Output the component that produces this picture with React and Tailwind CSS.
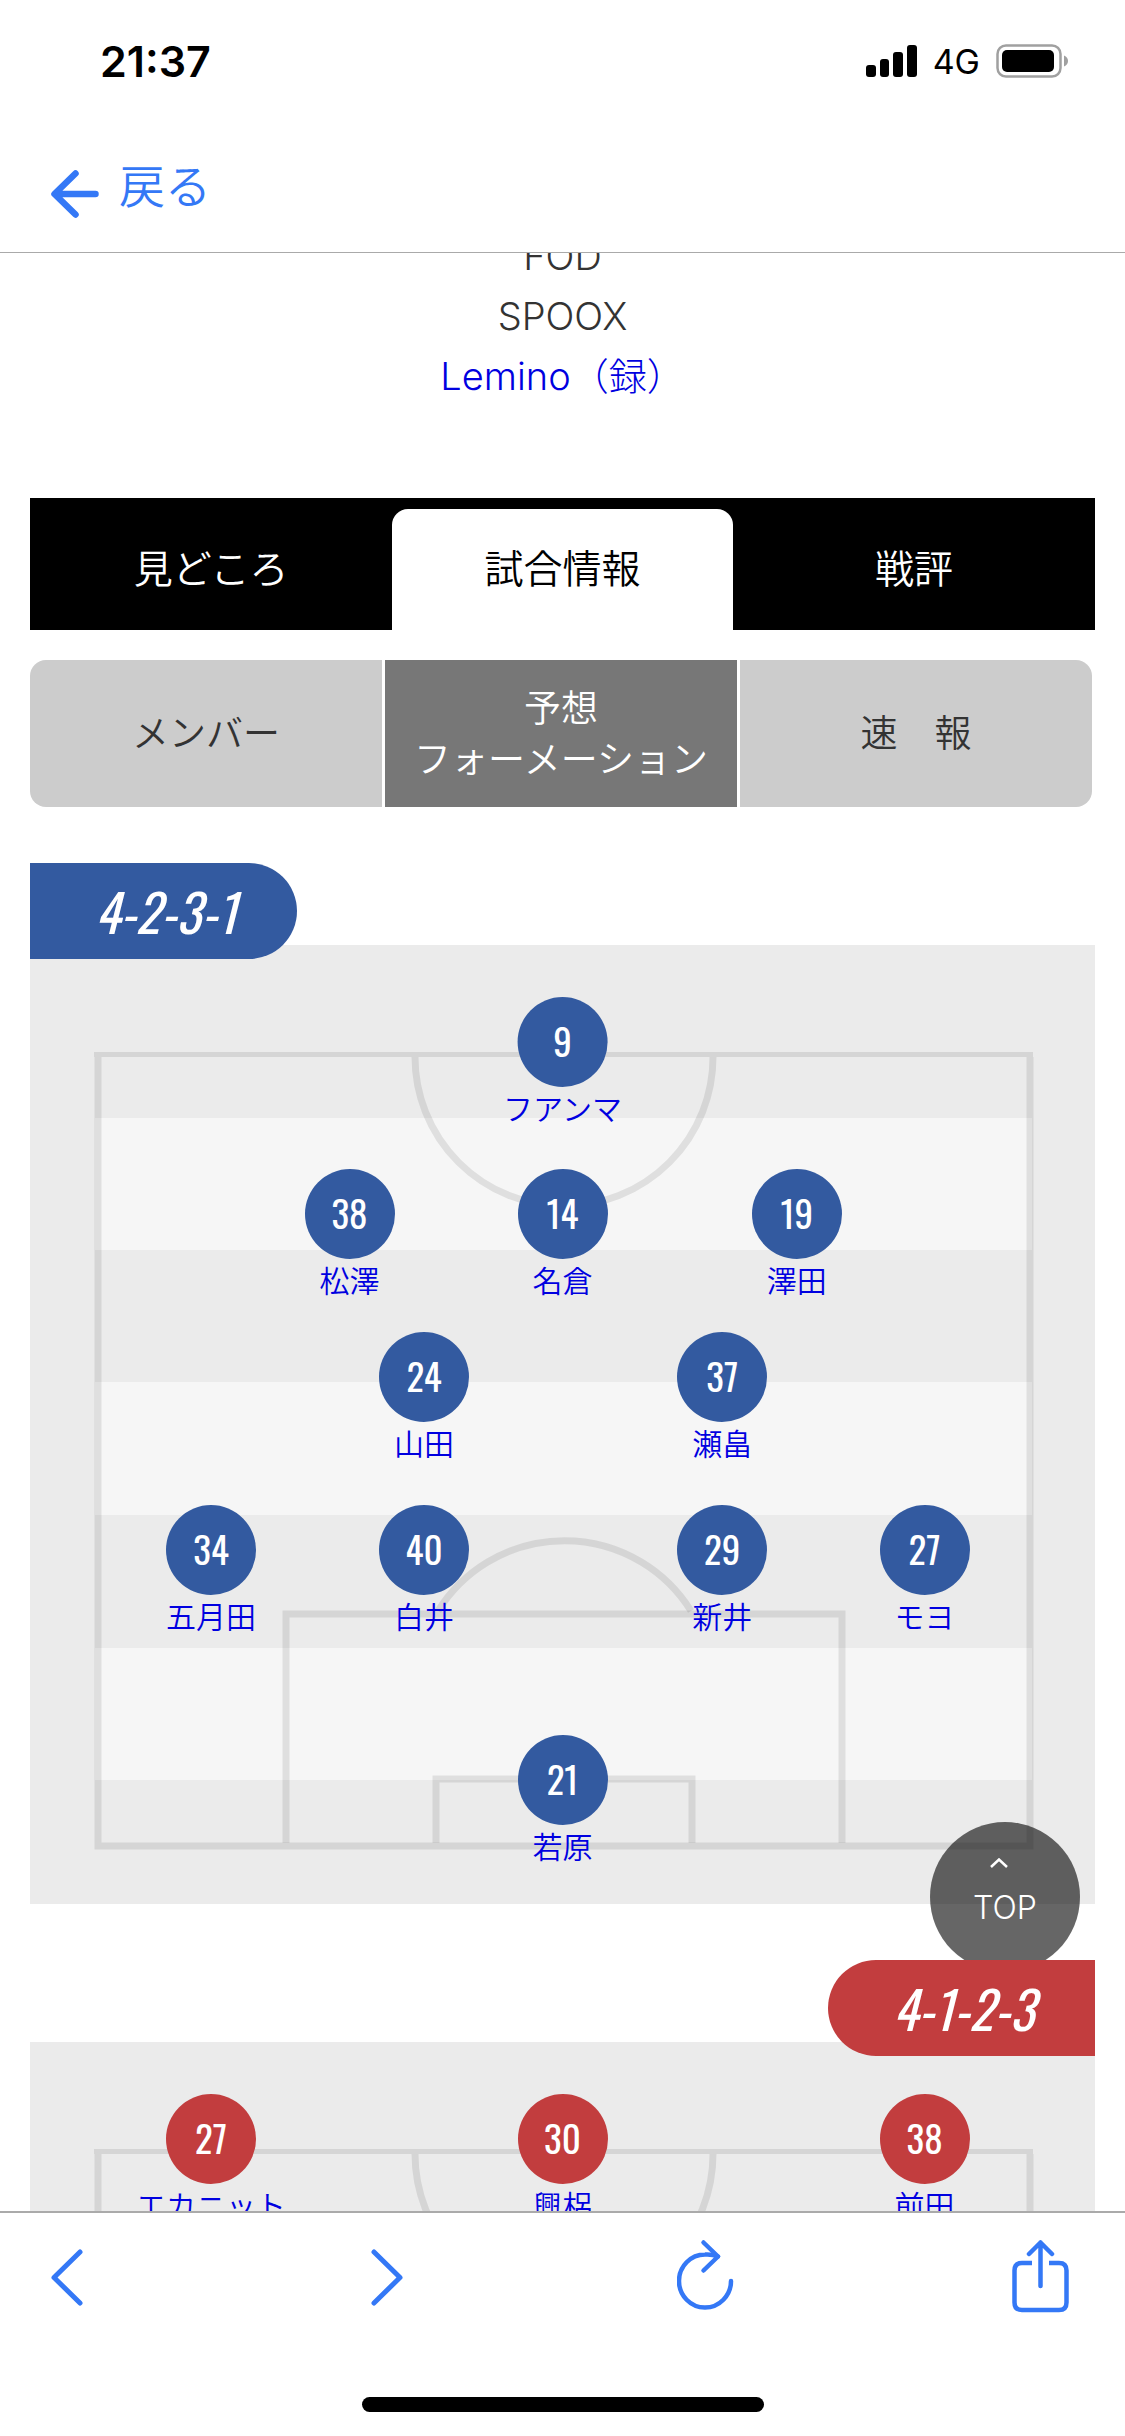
const homeTeam = {
  formation: '4-2-3-1',
  players: [
    { no: 9, name: 'フアンマ', x: 50, y: 97 },
    { no: 38, name: '松澤', x: 30, y: 269 },
    { no: 14, name: '名倉', x: 50, y: 269 },
    { no: 19, name: '澤田', x: 72, y: 269 },
    { no: 24, name: '山田', x: 37, y: 432 },
    { no: 37, name: '瀬畠', x: 65, y: 432 },
    { no: 34, name: '五月田', x: 17, y: 605 },
    { no: 40, name: '白井', x: 37, y: 605 },
    { no: 29, name: '新井', x: 65, y: 605 },
    { no: 27, name: 'モヨ', x: 84, y: 605 },
    { no: 21, name: '若原', x: 50, y: 835 },
  ],
};

const awayTeam = {
  formation: '4-1-2-3',
  players: [
    { no: 27, name: 'エカニット', x: 17, y: 97 },
    { no: 30, name: '興梠', x: 50, y: 97 },
    { no: 38, name: '前田', x: 84, y: 97 },
  ],
};

const PITCH_HEIGHT = 959;

function StatusBar() {
  return (
    <div className="flex items-center justify-between h-[122px] pl-[100px] pr-[57px] font-['Inter','Liberation_Sans',sans-serif]">
      <span className="text-[43px] font-semibold">21:37</span>
      <div className="flex items-center gap-4">
        <svg width="51" height="32" viewBox="0 0 51 32" fill="#000">
          <rect x="0" y="20" width="10" height="12" rx="3" />
          <rect x="14" y="14" width="9" height="18" rx="3" />
          <rect x="27" y="7" width="10" height="25" rx="3" />
          <rect x="41" y="0" width="10" height="32" rx="3" />
        </svg>
        <span className="text-[34px]">4G</span>
        <svg width="72" height="34" viewBox="0 0 72 34" fill="none">
          <rect x="1.5" y="1.5" width="63" height="31" rx="8.5" stroke="#a0a0a0" strokeWidth="2.5" />
          <rect x="6" y="6" width="52" height="22" rx="5" fill="#000" />
          <path d="M68 11.500c2.700.9 4 3 4 5.500s-1.300 4.600-4 5.500z" fill="#a0a0a0" />
        </svg>
      </div>
    </div>
  );
}

function Pitch() {
  return (
    <svg viewBox="0 0 1065 959" preserveAspectRatio="none" className="absolute inset-0 w-full h-full" fill="none">
      <rect width="1065" height="959" fill="#ebebeb" />
      <g fill="#f6f6f6">
        <rect x="65" y="173" width="937" height="132" />
        <rect x="65" y="437" width="937" height="133" />
        <rect x="65" y="703" width="937" height="132" />
      </g>
      <g stroke="#000" strokeOpacity="0.09" strokeWidth="7">
        <path d="M64 109.500H1003" strokeWidth="5" />
        <path d="M68 112V901H1000V112" />
        <path d="M385 112a149 149 0 0 0 298 0" />
        <path d="M256 898V669H812V898" />
        <path d="M408 666A149 149 0 0 1 661 666" />
        <path d="M406 898V834H662V898" />
      </g>
    </svg>
  );
}

function Player({ player, color }) {
  return (
    <div
      className="absolute flex flex-col items-center -translate-x-1/2 -mt-[45px]"
      style={{ left: `${player.x}%`, top: `${(player.y / PITCH_HEIGHT) * 100}%` }}
    >
      <span className={`flex items-center justify-center size-[90px] rounded-full text-white text-[37px] leading-none font-normal font-['Oswald',sans-serif] pb-1 ${color}`}>
        {player.no}
      </span>
      <a href="#" className="text-[#0000e0] text-[30px] leading-[44px] whitespace-nowrap">{player.name}</a>
    </div>
  );
}

function Formation({ team, color, away }) {
  return (
    <section className="flex flex-col mt-14">
      <h2
        className={`relative z-20 flex items-center justify-center w-[267px] h-24 -mb-[14px] pl-1 text-white text-[52px] italic font-normal font-['Oswald',sans-serif] ${color} ${
          away ? 'self-end rounded-l-full' : 'rounded-r-full'
        }`}
      >
        {team.formation}
      </h2>
      <div className="relative h-[959px]">
        <Pitch />
        {team.players.map(player => (
          <Player key={player.no} player={player} color={color} />
        ))}
      </div>
    </section>
  );
}

function Toolbar() {
  return (
    <footer className="relative z-30 bg-white border-t-2 border-[#aaa] h-[225px] flex flex-col items-center justify-between pb-6">
      <div className="flex w-full justify-between pl-[51px] pr-[56px] pt-[26px] text-[#3478f6]">
        <button aria-label="前のページ">
          <svg width="32" height="74" viewBox="0 0 32 74" fill="none" stroke="currentColor" strokeWidth="5" strokeLinecap="round" strokeLinejoin="round">
            <path d="M29 13 3 38.500 29 64" />
          </svg>
        </button>
        <button aria-label="次のページ">
          <svg width="45" height="74" viewBox="0 0 45 74" fill="none" stroke="currentColor" strokeWidth="5" strokeLinecap="round" strokeLinejoin="round">
            <path d="M16 13 42 38.500 16 64" />
          </svg>
        </button>
        <button aria-label="再読み込み">
          <svg width="60" height="74" viewBox="0 0 60 74" fill="none" stroke="currentColor" strokeWidth="4.500" strokeLinecap="round" strokeLinejoin="round">
            <path d="M54 42A26 26.500 0 1 1 28 15.500Q35 15 41 17.500" />
            <path d="M26.500 3.500 41 17.500 26.500 31.500" />
          </svg>
        </button>
        <button aria-label="共有">
          <svg width="57" height="74" viewBox="0 0 57 74" fill="none" stroke="currentColor" strokeWidth="4.500" strokeLinecap="round" strokeLinejoin="round">
            <path d="M20 24H10Q2.500 24 2.500 31.500V63.500Q2.500 71 10 71H47Q54.500 71 54.500 63.500V31.500Q54.500 24 47 24H37" strokeLinecap="butt" />
            <path d="M28.500 47V3.500M17 15 28.500 3.500 40 15" />
          </svg>
        </button>
      </div>
      <div className="w-[402px] h-[15px] rounded-full bg-black" />
    </footer>
  );
}

export default function App() {
  return (
    <div className="flex flex-col h-screen bg-white overflow-hidden font-['Inter','Noto_Sans_CJK_JP',sans-serif]">
      <header className="relative z-30 bg-white border-b border-[#aaa]">
        <StatusBar />
        <a href="#" className="flex h-[130px] pl-[51px] pt-[30px] gap-[20px] text-[#3478f6]">
          <svg width="48" height="48" viewBox="0 0 48 48" fill="none" stroke="currentColor" strokeWidth="6.500" strokeLinecap="round" strokeLinejoin="round" className="mt-[18px]">
            <path d="M24.500 3.500 3.500 24 24.500 44.500M4 24H44.500" />
          </svg>
          <span className="text-[46px] leading-[68px] font-[350]">戻る</span>
        </a>
      </header>

      <main className="relative flex-1 min-h-0 overflow-hidden px-[30px] font-[350]">
        <div className="-mt-[27px] text-center text-[#333] text-[38px] leading-[60px] font-light">
          <p>FOD</p>
          <p>SPOOX</p>
          <p><a href="#" className="text-[#0000e0]">Lemino（録）</a></p>
        </div>

        <nav className="flex mt-[92px] h-[132px] pt-[11px] bg-black text-white text-[39px]">
          <a href="#" className="flex-1 flex items-center justify-center">見どころ</a>
          <a href="#" className="w-[32%] flex items-center justify-center bg-white text-black rounded-t-2xl">試合情報</a>
          <a href="#" className="flex-1 flex items-center justify-center">戦評</a>
        </nav>

        <nav className="flex gap-[3px] mt-[30px] mr-[3px] h-[147px] text-[#333] text-[37px] leading-[51px] text-center">
          <a href="#" className="flex-1 flex items-center justify-center bg-[#ccc] rounded-l-2xl">メンバー</a>
          <a href="#" className="flex-1 flex items-center justify-center bg-[#777] text-white">予想<br />フォーメーション</a>
          <a href="#" className="flex-1 flex items-center justify-center bg-[#ccc] rounded-r-2xl">速　報</a>
        </nav>

        <Formation team={homeTeam} color="bg-[#335aa0]" />
        <Formation team={awayTeam} color="bg-[#c23d3e]" away />

        <a
          href="#"
          className="absolute z-10 right-[45px] bottom-[239px] flex flex-col items-center justify-center size-[150px] pb-1 rounded-full bg-black/60 text-white text-[32px] leading-[48px] font-light"
        >
          <svg width="18" height="10" viewBox="0 0 18 10" fill="none" stroke="currentColor" strokeWidth="2.500" className="mr-3 mb-4">
            <path d="M1 9 9 1.500 17 9" />
          </svg>
          TOP
        </a>
      </main>

      <Toolbar />
    </div>
  );
}
